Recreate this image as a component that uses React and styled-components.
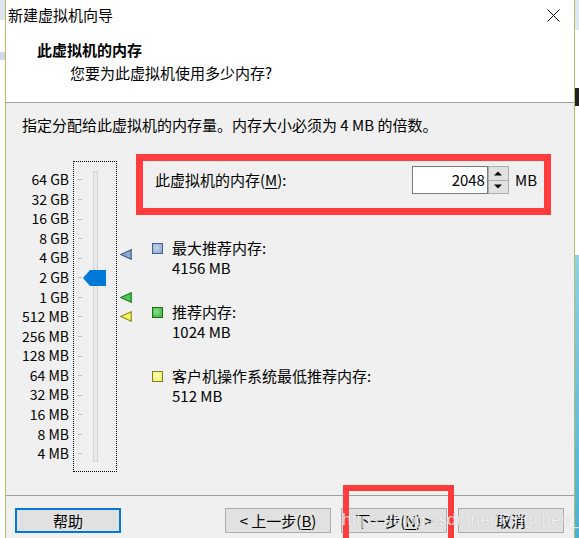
import React from "react";
import styled, { createGlobalStyle } from "styled-components";

const GlobalStyle = createGlobalStyle`
  html, body {
    margin: 0;
    padding: 0;
    background: #fff;
  }
  body {
    font-family: "Noto Sans CJK SC", "Noto Sans", sans-serif;
    font-size: 15px;
    color: #000;
  }
`;

const STEP = 19.57;
const FIRST = 18;
const sizes = [
  "64 GB", "32 GB", "16 GB", "8 GB", "4 GB", "2 GB", "1 GB",
  "512 MB", "256 MB", "128 MB", "64 MB", "32 MB", "16 MB", "8 MB", "4 MB",
];
const posFor = (mb) => FIRST + STEP * Math.log2(65536 / mb);

const Screen = styled.div`
  display: flex;
  width: 579px;
  height: 538px;
  overflow: hidden;
`;

const LeftEdge = styled.div`
  width: 5px;
  flex: none;
  background: linear-gradient(#dfe5ef 0 20px, #fff 20px 52px, #cfd9ea 52px 60px, #fff 60px);
`;

const RightEdge = styled.div`
  flex: 1;
  background: linear-gradient(
    #dde8f5 0 30px,
    #fff 30px 88px,
    #222 88px 106px,
    #fff 106px 255px,
    #8fd0e6 255px,
    #4dafd6
  );
`;

const Window = styled.div`
  position: relative;
  width: 568px;
  flex: none;
  display: flex;
  flex-direction: column;
  background: #f0f0f0;
  border-left: 1px solid #b3bd65;
  border-right: 1px solid #b3bd65;
`;

const TitleBar = styled.div`
  height: 30px;
  display: flex;
  align-items: center;
  justify-content: space-between;
  padding: 0 14px 0 2px;
  background: #fff;
  line-height: 20px;
`;

const Header = styled.div`
  height: 62px;
  padding: 10px 0 0 31px;
  background: #fff;
  border-bottom: 1px solid #a0a0a0;
`;

const HeadTitle = styled.div`
  font-weight: bold;
  line-height: 20px;
`;

const HeadSub = styled.div`
  margin: 3px 0 0 33px;
  line-height: 20px;
`;

const Body = styled.div`
  flex: 1;
  padding: 12px 0 0 16px;
`;

const Hint = styled.div`
  line-height: 20px;
`;

const Main = styled.div`
  display: flex;
  align-items: flex-start;
  margin-top: 19px;
`;

const Slider = styled.div`
  display: flex;
  margin-top: 7px;
`;

const Labels = styled.div`
  width: 47px;
  margin-right: 4px;
  padding-top: 9.2px;
  text-align: right;
  font-size: 14px;
`;

const Label = styled.div`
  height: ${STEP}px;
  line-height: ${STEP}px;
  white-space: nowrap;
`;

const TrackBox = styled.div`
  position: relative;
  width: 42px;
  height: 309px;
  border: 1px dotted #000;
`;

const Ticks = styled.div`
  padding-top: 8.2px;
`;

const Tick = styled.div`
  height: ${STEP}px;
  display: flex;
  align-items: center;
  padding-left: 4px;
  &::before {
    content: "";
    width: 4px;
    height: 1px;
    background: #bdbdbd;
  }
`;

const Track = styled.div`
  position: absolute;
  left: 19px;
  top: 9px;
  width: 3px;
  height: 289px;
  background: #e7eae7;
  border: 1px solid #d2d4d2;
`;

const Thumb = styled.svg`
  position: absolute;
  left: 9px;
`;

const Marker = styled.svg`
  position: absolute;
  left: 46px;
`;

const Panel = styled.div`
  margin-left: 19px;
  width: 415px;
`;

const RedBox = styled.div`
  box-sizing: border-box;
  height: 61px;
  border: 7px solid #ff3b3b;
  padding: 5px 7px 0 12px;
`;

const MemRow = styled.div`
  display: flex;
  align-items: center;
  height: 28px;
`;

const MemLabel = styled.div`
  flex: 1;
  line-height: 20px;
  margin-top: -1px;
`;

const U = styled.span`
  text-decoration: underline;
  text-underline-offset: 2px;
`;

const NumInput = styled.div`
  box-sizing: border-box;
  width: 76px;
  height: 28px;
  background: #fff;
  border: 1px solid #7a7a7a;
  text-align: right;
  padding-right: 2px;
  line-height: 26px;
`;

const Spin = styled.div`
  display: flex;
  flex-direction: column;
  width: 21px;
  height: 28px;
`;

const SpinBtn = styled.div`
  box-sizing: border-box;
  flex: 1;
  display: flex;
  align-items: center;
  justify-content: center;
  background: #e1e1e1;
  border: 1px solid #adadad;
  & + & {
    border-top: none;
  }
`;

const Unit = styled.div`
  margin-left: 6px;
  line-height: 20px;
`;

const Legend = styled.div`
  display: flex;
  flex-direction: column;
  gap: 24px;
  margin-top: 23px;
  padding-left: 16px;
`;

const Item = styled.div`
  display: flex;
  align-items: flex-start;
`;

const Swatch = styled.div`
  box-sizing: border-box;
  width: 11px;
  height: 11px;
  margin-top: 5px;
  margin-right: 9px;
  border: 1px solid ${(p) => p.$edge};
  background: radial-gradient(circle at 40% 40%, ${(p) => p.$light}, ${(p) => p.$fill});
`;

const ItemText = styled.div`
  line-height: 20px;
`;

const Footer = styled.div`
  box-sizing: border-box;
  height: 43px;
  display: flex;
  align-items: flex-start;
  padding: 12px 10px 0 9px;
  border-top: 1px solid #a0a0a0;
`;

const Button = styled.div`
  box-sizing: border-box;
  width: 106px;
  height: 25px;
  display: flex;
  align-items: center;
  justify-content: center;
  background: #e1e1e1;
  border: ${(p) => (p.$focus ? "2px solid #0078d7" : "1px solid #adadad")};
  margin-left: ${(p) => p.$gap || 0}px;
  line-height: 20px;
  white-space: pre;
`;

const Spacer = styled.div`
  flex: 1;
`;

const Annotation = styled.div`
  position: absolute;
  left: 337px;
  top: 485px;
  width: 111px;
  height: 70px;
  box-sizing: border-box;
  border: 6px solid #ff3b3b;
  pointer-events: none;
`;

const Watermark = styled.div`
  position: absolute;
  left: 336px;
  top: 509px;
  font-family: "Liberation Sans", Arial, sans-serif;
  font-size: 17px;
  line-height: 22px;
  color: rgba(255, 255, 255, 0.8);
  text-shadow: 0 0 1px rgba(0, 0, 0, 0.25);
  white-space: nowrap;
  pointer-events: none;
`;

const Tri = ({ top, fill, edge }) => (
  <Marker width="12" height="11" viewBox="0 0 12 11" style={{ top: top - 5.5 }}>
    <path d="M0.8 5.5 L11.2 0.8 L11.2 10.2 Z" fill={fill} stroke={edge} strokeWidth="1.2" />
  </Marker>
);

const Arrow = ({ up }) => (
  <svg width="8" height="5" viewBox="0 0 8 5">
    <path d={up ? "M0 4.5 L4 0.5 L8 4.5 Z" : "M0 0.5 L4 4.5 L8 0.5 Z"} fill="#000" />
  </svg>
);

export default function App() {
  const value = 2048;
  const thumbTop = posFor(value) - 8;
  return (
    <>
      <GlobalStyle />
      <Screen>
        <LeftEdge />
        <Window>
          <TitleBar>
            <span>新建虚拟机向导</span>
            <svg width="13" height="13" viewBox="0 0 13 13">
              <path d="M0.5 0.5 L12.5 12.5 M12.5 0.5 L0.5 12.5" stroke="#000" strokeWidth="1" />
            </svg>
          </TitleBar>
          <Header>
            <HeadTitle>此虚拟机的内存</HeadTitle>
            <HeadSub>您要为此虚拟机使用多少内存?</HeadSub>
          </Header>
          <Body>
            <Hint>指定分配给此虚拟机的内存量。内存大小必须为 4 MB 的倍数。</Hint>
            <Main>
              <Slider>
                <Labels>
                  {sizes.map((s) => (
                    <Label key={s}>{s}</Label>
                  ))}
                </Labels>
                <TrackBox>
                  <Track />
                  <Ticks>
                    {sizes.map((s) => (
                      <Tick key={s} />
                    ))}
                  </Ticks>
                  <Thumb width="23" height="16" viewBox="0 0 23 16" style={{ top: thumbTop }}>
                    <path d="M0 8 L7 0 L23 0 L23 16 L7 16 Z" fill="#0078d7" />
                  </Thumb>
                  <Tri top={posFor(4156) - 3} fill="#8fa9d3" edge="#3d5a8c" />
                  <Tri top={posFor(1024)} fill="#4ec94e" edge="#1d7a1d" />
                  <Tri top={posFor(512)} fill="#f6f65a" edge="#8a8a1e" />
                </TrackBox>
              </Slider>
              <Panel>
                <RedBox>
                  <MemRow>
                    <MemLabel>
                      此虚拟机的内存(<U>M</U>):
                    </MemLabel>
                    <NumInput>2048</NumInput>
                    <Spin>
                      <SpinBtn>
                        <Arrow up />
                      </SpinBtn>
                      <SpinBtn>
                        <Arrow />
                      </SpinBtn>
                    </Spin>
                    <Unit>MB</Unit>
                  </MemRow>
                </RedBox>
                <Legend>
                  <Item>
                    <Swatch $fill="#86a3cf" $light="#c4d4ec" $edge="#45618f" />
                    <ItemText>
                      最大推荐内存:
                      <br />
                      4156 MB
                    </ItemText>
                  </Item>
                  <Item>
                    <Swatch $fill="#36b236" $light="#8be08b" $edge="#1b6f1b" />
                    <ItemText>
                      推荐内存:
                      <br />
                      1024 MB
                    </ItemText>
                  </Item>
                  <Item>
                    <Swatch $fill="#f2f250" $light="#ffffc0" $edge="#7d7d22" />
                    <ItemText>
                      客户机操作系统最低推荐内存:
                      <br />
                      512 MB
                    </ItemText>
                  </Item>
                </Legend>
              </Panel>
            </Main>
          </Body>
          <Footer>
            <Button $focus>帮助</Button>
            <Spacer />
            <Button>
              {"< 上一步("}<U>B</U>)
            </Button>
            <Button $gap={10}>
              下一步(<U>N</U>){" >"}
            </Button>
            <Button $gap={11}>取消</Button>
          </Footer>
          <Annotation />
          <Watermark>https://blog.csdn.net/Pingchen_</Watermark>
        </Window>
        <RightEdge />
      </Screen>
    </>
  );
}
